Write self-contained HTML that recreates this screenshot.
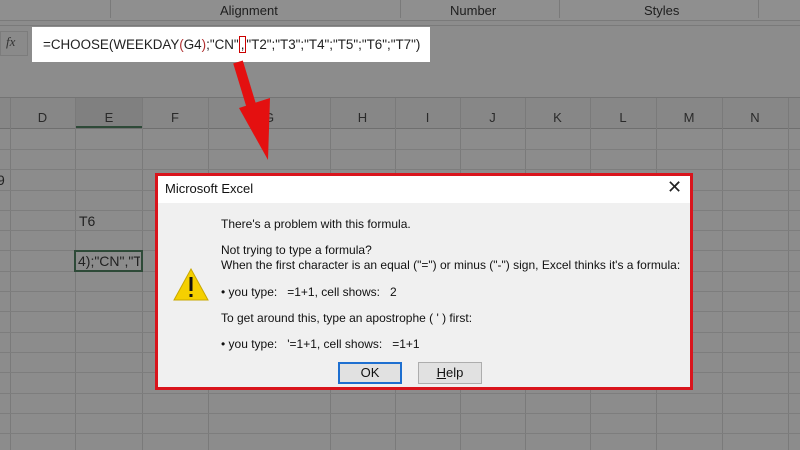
<!DOCTYPE html>
<html><head><style>
*{margin:0;padding:0;box-sizing:border-box}
body{width:800px;height:450px;overflow:hidden;background:#8c8c8c;font-family:"Liberation Sans",sans-serif;position:relative}
.a{position:absolute}
.vl{position:absolute;width:1px;background:#7a7a7a}
.hl{position:absolute;height:1px;background:#7d7d7d;left:0;width:800px}
.ch{position:absolute;top:110px;font-size:13px;color:#2a2a2a;text-align:center}
.dt{position:absolute;left:221px;font-size:12px;color:#111;font-family:"Liberation Sans",sans-serif;white-space:nowrap}
</style></head><body>
<div class="a" style="left:0;top:0;width:800px;height:20px;background:#8f8f8f"></div>
<div class="a" style="left:220px;top:3px;font-size:13px;color:#1e1e1e">Alignment</div>
<div class="a" style="left:450px;top:3px;font-size:13px;color:#1e1e1e">Number</div>
<div class="a" style="left:644px;top:3px;font-size:13px;color:#1e1e1e">Styles</div>
<div class="vl" style="left:110px;top:0;height:18px"></div>
<div class="vl" style="left:400px;top:0;height:18px"></div>
<div class="vl" style="left:559px;top:0;height:18px"></div>
<div class="vl" style="left:758px;top:0;height:18px"></div>
<div class="hl" style="top:20px;background:#7a7a7a"></div>
<div class="hl" style="top:25px;background:#7a7a7a"></div>
<div class="a" style="left:0;top:31px;width:28px;height:25px;background:#8a8a8a;border:1px solid #7c7c7c"></div>
<div class="a" style="left:6px;top:34px;font-size:13px;font-style:italic;font-family:'Liberation Serif',serif;color:#333">fx</div>
<div class="a" style="left:32px;top:27px;width:398px;height:35px;background:#fff"></div>
<div class="a" style="left:43px;top:37px;font-size:13.4px;color:#222;white-space:nowrap">=CHOOSE(WEEKDAY<span style="color:#b03030">(</span>G4<span style="color:#b03030">)</span>;"CN"<span style="border:1px solid #c00;padding:0 1px">,</span>"T2";"T3";"T4";"T5";"T6";"T7")</div>
<div class="hl" style="top:97px;background:#747474"></div>
<div class="a" style="left:0;top:98px;width:800px;height:30px;background:#878787"></div>
<div class="a" style="left:76px;top:98px;width:66px;height:30px;background:#808080;border-bottom:2px solid #2e4a38"></div>
<div class="hl" style="top:128px;background:#6f6f6f"></div>
<div class="ch" style="left:10px;width:65px">D</div>
<div class="ch" style="left:76px;width:66px">E</div>
<div class="ch" style="left:142px;width:66px">F</div>
<div class="ch" style="left:208px;width:122px">G</div>
<div class="ch" style="left:330px;width:65px">H</div>
<div class="ch" style="left:395px;width:65px">I</div>
<div class="ch" style="left:460px;width:65px">J</div>
<div class="ch" style="left:525px;width:65px">K</div>
<div class="ch" style="left:590px;width:66px">L</div>
<div class="ch" style="left:656px;width:66px">M</div>
<div class="ch" style="left:722px;width:66px">N</div>
<div class="vl" style="left:10px;top:98px;height:352px"></div>
<div class="vl" style="left:75px;top:98px;height:352px"></div>
<div class="vl" style="left:142px;top:98px;height:352px"></div>
<div class="vl" style="left:208px;top:98px;height:352px"></div>
<div class="vl" style="left:330px;top:98px;height:352px"></div>
<div class="vl" style="left:395px;top:98px;height:352px"></div>
<div class="vl" style="left:460px;top:98px;height:352px"></div>
<div class="vl" style="left:525px;top:98px;height:352px"></div>
<div class="vl" style="left:590px;top:98px;height:352px"></div>
<div class="vl" style="left:656px;top:98px;height:352px"></div>
<div class="vl" style="left:722px;top:98px;height:352px"></div>
<div class="vl" style="left:788px;top:98px;height:352px"></div>
<div class="hl" style="top:149px"></div><div class="hl" style="top:169px"></div>
<div class="hl" style="top:190px"></div><div class="hl" style="top:210px"></div>
<div class="hl" style="top:230px"></div><div class="hl" style="top:250px"></div>
<div class="hl" style="top:271px"></div><div class="hl" style="top:291px"></div>
<div class="hl" style="top:311px"></div><div class="hl" style="top:332px"></div>
<div class="hl" style="top:352px"></div><div class="hl" style="top:372px"></div>
<div class="hl" style="top:393px"></div><div class="hl" style="top:413px"></div>
<div class="hl" style="top:433px"></div>
<div class="a" style="left:-3px;top:172px;font-size:14px;color:#222">9</div>
<div class="a" style="left:79px;top:213px;font-size:14px;color:#222">T6</div>
<div class="a" style="left:74px;top:250px;width:69px;height:22px;border:2px solid #2e4a38;background:#8c8c8c"></div>
<div class="a" style="left:78px;top:253px;font-size:14px;color:#222;white-space:nowrap;width:62px;overflow:hidden">4);"CN","T</div>
<svg class="a" style="left:0;top:0" width="800" height="450"><line x1="238" y1="62" x2="255" y2="118" stroke="#e41010" stroke-width="10"/><polygon points="239,108 270,98 268,160" fill="#e41010"/></svg>
<div class="a" style="left:155px;top:173px;width:538px;height:217px;border:3px solid #d9141c;background:#f0f0f0"></div>
<div class="a" style="left:158px;top:176px;width:532px;height:27px;background:#fff"></div>
<div class="a" style="left:165px;top:181px;font-size:13px;color:#111">Microsoft Excel</div>
<div class="a" style="left:667px;top:177px;font-size:18px;color:#222">✕</div>
<svg class="a" style="left:173px;top:268px" width="36" height="33"><polygon points="18,1 35,32 1,32" fill="#f5d000" stroke="#c9a800" stroke-width="1"/><rect x="16.5" y="9" width="3" height="14" fill="#111"/><rect x="16.5" y="26" width="3" height="3" fill="#111"/></svg>
<div class="dt" style="top:217px">There's a problem with this formula.</div>
<div class="dt" style="top:243px">Not trying to type a formula?</div>
<div class="dt" style="top:258px">When the first character is an equal ("=") or minus ("-") sign, Excel thinks it's a formula:</div>
<div class="dt" style="top:285px">• you type: &nbsp; =1+1, cell shows: &nbsp; 2</div>
<div class="dt" style="top:311px">To get around this, type an apostrophe ( ' ) first:</div>
<div class="dt" style="top:337px">• you type: &nbsp; '=1+1, cell shows: &nbsp; =1+1</div>
<div class="a" style="left:338px;top:362px;width:64px;height:22px;border:2px solid #1e6fd0;background:#e1e1e1;text-align:center;font-size:13px;line-height:18px;color:#111">OK</div>
<div class="a" style="left:418px;top:362px;width:64px;height:22px;border:1px solid #adadad;background:#e1e1e1;text-align:center;font-size:13px;line-height:20px;color:#111"><u>H</u>elp</div>
</body></html>
